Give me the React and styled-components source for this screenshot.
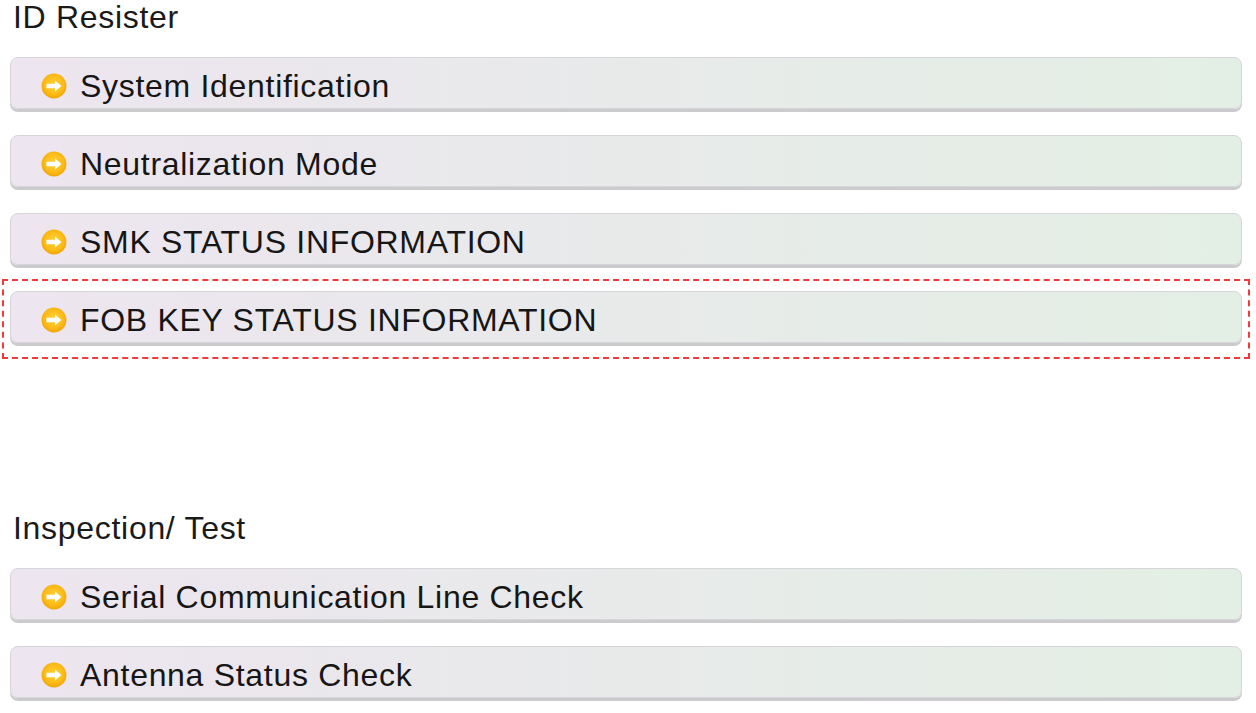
import React from 'react';
import styled, { createGlobalStyle } from 'styled-components';

const Global = createGlobalStyle`
  html, body { margin: 0; padding: 0; background: #fff; }
  body { font-family: "Liberation Sans", Arial, sans-serif; color: #1c1c1c; }
`;

const Page = styled.div`
  width: 1256px;
  height: 713px;
  overflow: hidden;
  padding: 0 14px 0 10px;
  box-sizing: border-box;
`;

const Section = styled.section`
  display: flex;
  flex-direction: column;
  gap: 23px;
  margin-top: ${p => p.$top || 0}px;
`;

const Title = styled.h2`
  margin: 0 0 0 3px;
  font-size: 32px;
  font-weight: normal;
  line-height: 34px;
  letter-spacing: 0.7px;
  color: #1a1a1a;
`;

const Bar = styled.div`
  display: flex;
  align-items: center;
  gap: 13px;
  height: 52px;
  padding: 6px 0 0 30px;
  box-sizing: border-box;
  border: 1px solid #d6d6da;
  border-radius: 8px;
  background: linear-gradient(90deg, #ede5ef 0%, #e8eaea 50%, #e3efe4 100%);
  box-shadow: 0 3px 0 #cbcbce;
  margin-bottom: 3px;
`;

const Label = styled.span`
  font-size: 32px;
  letter-spacing: 0.7px;
  line-height: 32px;
  color: #161616;
`;

const Highlight = styled.div`
  position: relative;
  &::after {
    content: '';
    position: absolute;
    top: -12px;
    bottom: -13px;
    left: -8px;
    right: -8px;
    border: 2px dashed #f23a3a;
    pointer-events: none;
  }
`;

const Bullet = () => (
  <svg width="26" height="26" viewBox="0 0 24 24" style={{ flex: 'none' }}>
    <defs>
      <radialGradient id="bg" cx="50%" cy="45%" r="55%">
        <stop offset="0%" stopColor="#ffd23a" />
        <stop offset="70%" stopColor="#fbbb17" />
        <stop offset="100%" stopColor="#f3a400" />
      </radialGradient>
    </defs>
    <circle cx="12" cy="12" r="11.5" fill="url(#bg)" />
    <path d="M5 10h8V7L18.8 12 13 17v-3H5z" fill="#fff" />
  </svg>
);

const Item = ({ children }) => (
  <Bar>
    <Bullet />
    <Label>{children}</Label>
  </Bar>
);

export default function App() {
  return (
    <Page>
      <Global />
      <Section>
        <Title>ID Resister</Title>
        <Item>System Identification</Item>
        <Item>Neutralization Mode</Item>
        <Item>SMK STATUS INFORMATION</Item>
        <Highlight>
          <Item>FOB KEY STATUS INFORMATION</Item>
        </Highlight>
      </Section>
      <Section $top={165}>
        <Title>Inspection/ Test</Title>
        <Item>Serial Communication Line Check</Item>
        <Item>Antenna Status Check</Item>
      </Section>
    </Page>
  );
}
